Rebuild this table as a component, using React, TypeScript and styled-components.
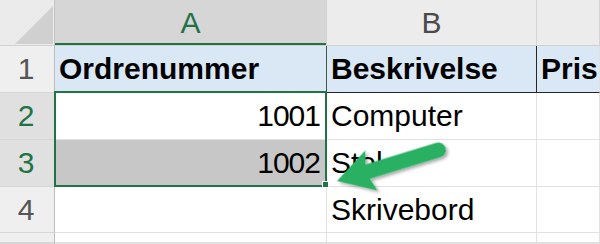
import React from "react";
import styled, { createGlobalStyle, css } from "styled-components";

const GlobalStyle = createGlobalStyle`
  html, body { margin: 0; padding: 0; background: #ffffff; }
  body { font-family: "Liberation Sans", Arial, sans-serif; }
  * { box-sizing: border-box; }
`;

const GREEN = "#217346";

const Sheet = styled.div`
  position: relative;
  width: 600px;
  height: 244px;
  overflow: hidden;
  display: grid;
  grid-template-columns: 55px 272px 210px 1fr;
  grid-template-rows: 46px 47px 47px 47px 46px 1fr;
  background: #ffffff;
  font-family: "Liberation Sans", Arial, sans-serif;
  font-size: 30px;
`;

const CornerCell = styled.div`
  position: relative;
  background: #ebebeb;
  border-right: 1px solid #c4c4c4;
  border-bottom: 1px solid #d2d2d2;
  &::after {
    content: "";
    position: absolute;
    left: 15px;
    top: 6px;
    width: 38px;
    height: 38px;
    background: #d0d0d0;
    clip-path: polygon(0 100%, 100% 100%, 100% 0);
  }
`;

const ColHeader = styled.div<{ $selected?: boolean }>`
  display: flex;
  align-items: center;
  justify-content: center;
  background: ${(p) => (p.$selected ? "#d6d6d6" : "#ececec")};
  color: ${(p) => (p.$selected ? GREEN : "#4a4a4a")};
  border-right: 1px solid #d4d4d4;
  border-bottom: 1px solid #d0d0d0;
  ${(p) =>
    p.$selected &&
    css`
      box-shadow: inset 0 -2px 0 ${GREEN};
    `}
`;

const RowHeader = styled.div<{ $selected?: boolean }>`
  display: flex;
  align-items: center;
  justify-content: center;
  padding-right: 2px;
  background: ${(p) => (p.$selected ? "#e0e0e0" : "#efefef")};
  color: ${(p) => (p.$selected ? GREEN : "#555555")};
  border-right: 1px solid ${(p) => (p.$selected ? GREEN : "#bdbdbd")};
  border-bottom: 1px solid #d6d6d6;
`;

const Cell = styled.div<{
  $right?: boolean;
  $bold?: boolean;
  $fill?: string;
  $edge?: string;
  $base?: string;
}>`
  display: flex;
  align-items: center;
  justify-content: ${(p) => (p.$right ? "flex-end" : "flex-start")};
  padding: ${(p) => (p.$right ? "0 6px 0 0" : "0 0 0 4px")};
  white-space: nowrap;
  overflow: hidden;
  color: #000000;
  font-weight: ${(p) => (p.$bold ? 700 : 400)};
  letter-spacing: ${(p) => (p.$right ? "-1px" : "0")};
  background: ${(p) => p.$fill ?? "#ffffff"};
  border-right: 1px solid ${(p) => p.$edge ?? "#e1e1e1"};
  border-bottom: 1px solid ${(p) => p.$base ?? "#e1e1e1"};
`;

const Selection = styled.div`
  position: absolute;
  left: 54px;
  top: 91px;
  width: 273px;
  height: 96px;
  border: 2px solid ${GREEN};
  pointer-events: none;
`;

const FillHandle = styled.div`
  position: absolute;
  left: 322px;
  top: 181px;
  width: 7px;
  height: 7px;
  background: ${GREEN};
  border: 1px solid #ffffff;
  pointer-events: none;
`;

const ArrowLayer = styled.svg`
  position: absolute;
  left: 0;
  top: 0;
  width: 600px;
  height: 244px;
  pointer-events: none;
  overflow: visible;
`;

const HEAD_BLUE = "#dae8f6";

export default function App() {
  return (
    <>
      <GlobalStyle />
      <Sheet>
        <CornerCell />
        <ColHeader $selected>A</ColHeader>
        <ColHeader>B</ColHeader>
        <ColHeader />

        <RowHeader>1</RowHeader>
        <Cell $bold $fill={HEAD_BLUE} $edge="#3d5a4a" $base="#262626">
          Ordrenummer
        </Cell>
        <Cell $bold $fill={HEAD_BLUE} $edge="#262626" $base="#262626">
          Beskrivelse
        </Cell>
        <Cell $bold $fill={HEAD_BLUE} $base="#262626">
          Pris
        </Cell>

        <RowHeader $selected>2</RowHeader>
        <Cell $right>1001</Cell>
        <Cell>Computer</Cell>
        <Cell />

        <RowHeader $selected>3</RowHeader>
        <Cell $right $fill="#c7c7c7">
          1002
        </Cell>
        <Cell>Stol</Cell>
        <Cell />

        <RowHeader>4</RowHeader>
        <Cell />
        <Cell>Skrivebord</Cell>
        <Cell />

        <RowHeader />
        <Cell />
        <Cell />
        <Cell />

        <RowHeader />
        <Cell />
        <Cell />
        <Cell />

        <Selection />
        <FillHandle />
        <ArrowLayer viewBox="0 0 600 244">
          <defs>
            <filter id="arrowShadow" x="-20%" y="-40%" width="140%" height="180%">
              <feDropShadow dx="1.5" dy="2.5" stdDeviation="1.8" floodColor="#000000" floodOpacity="0.35" />
            </filter>
          </defs>
          <g transform="translate(337 181) rotate(-17)" filter="url(#arrowShadow)">
            <path
              d="M0 0 L36 -21 L32 -7.5 L106 -7.5 A7.5 7.5 0 0 1 106 7.5 L32 7.5 L36 21 Z"
              fill="#2bb064"
              strokeLinejoin="round"
            />
          </g>
        </ArrowLayer>
      </Sheet>
    </>
  );
}
